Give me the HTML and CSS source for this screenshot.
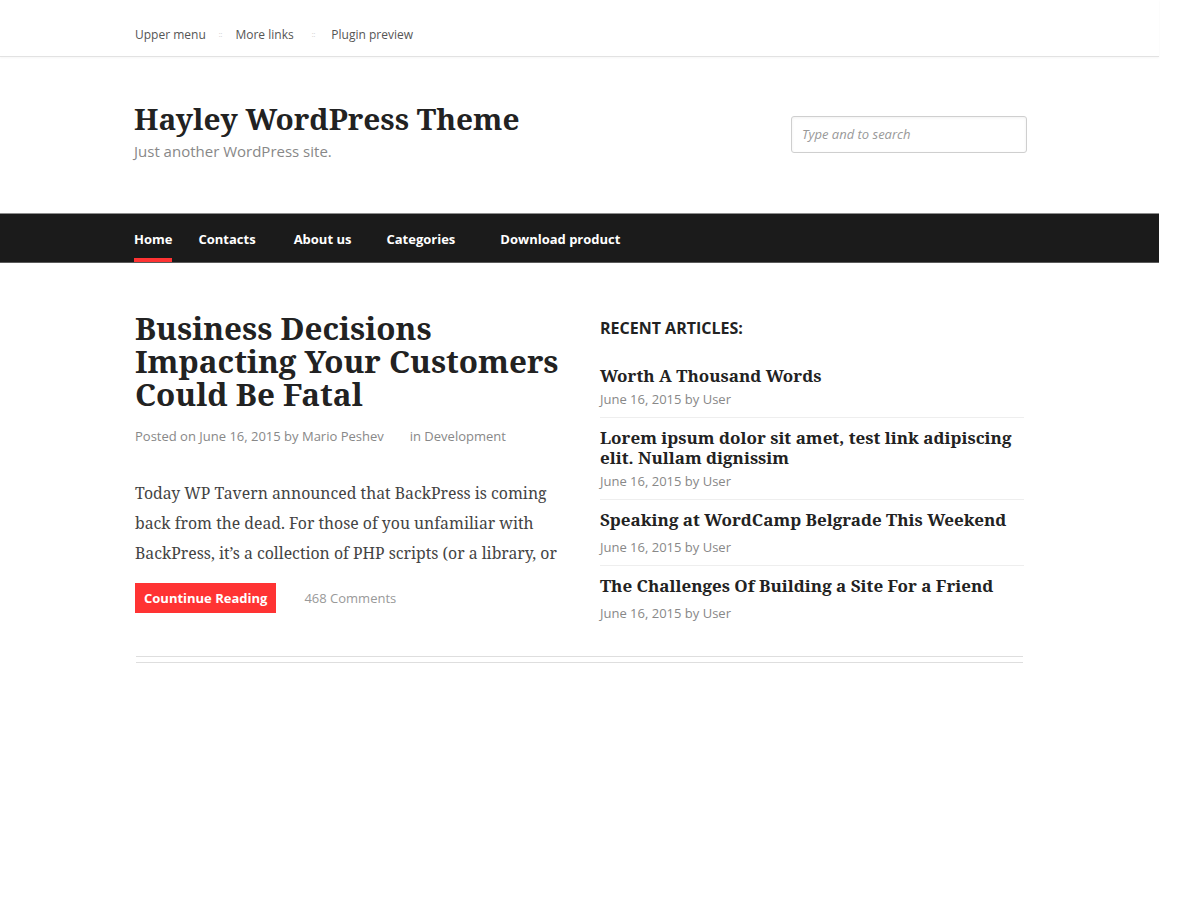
FILE: index.html
```html
<!DOCTYPE html>
<html lang="en">
<head>
<meta charset="utf-8">
<title>Hayley WordPress Theme</title>
<link rel="stylesheet" href="styles.css">
</head>
<body>
<div class="page">
  <div class="topbar">
    <div class="container">
      <ul class="upper-menu">
        <li><a href="#">Upper menu</a></li>
        <li class="sep">::</li>
        <li><a href="#">More links</a></li>
        <li class="sep sep-wide">::</li>
        <li><a href="#">Plugin preview</a></li>
      </ul>
    </div>
  </div>

  <header class="site-header">
    <div class="container header-inner">
      <div class="branding">
        <h1 class="site-title">Hayley WordPress Theme</h1>
        <p class="site-desc">Just another WordPress site.</p>
      </div>
      <input class="search" type="text" placeholder="Type and to search">
    </div>
  </header>

  <nav class="main-nav">
    <div class="container">
      <ul class="nav-list">
        <li class="nav-item active"><a href="#">Home</a></li>
        <li class="nav-item pad-a"><a href="#">Contacts</a></li>
        <li class="nav-item pad-b"><a href="#">About us</a></li>
        <li class="nav-item pad-c"><a href="#">Categories</a></li>
        <li class="nav-item"><a href="#">Download product</a></li>
      </ul>
    </div>
  </nav>

  <main class="container main">
    <article class="post">
      <h2 class="post-title">Business Decisions Impacting Your Customers Could Be Fatal</h2>
      <div class="post-meta">
        <span>Posted on June 16, 2015 by Mario Peshev</span>
        <span>in Development</span>
      </div>
      <p class="excerpt">Today WP Tavern announced that BackPress is coming back from the dead. For those of you unfamiliar with BackPress, it’s a collection of PHP scripts (or a library, or</p>
      <div class="post-actions">
        <a class="btn" href="#">Countinue Reading</a>
        <span class="comments">468 Comments</span>
      </div>
    </article>

    <aside class="sidebar">
      <h3 class="widget-title">RECENT ARTICLES:</h3>
      <ul class="recent">
        <li class="recent-item">
          <a class="recent-title" href="#">Worth A Thousand Words</a>
          <div class="recent-date">June 16, 2015 by User</div>
        </li>
        <li class="recent-item">
          <a class="recent-title" href="#">Lorem ipsum dolor sit amet, test link adipiscing elit. Nullam dignissim</a>
          <div class="recent-date">June 16, 2015 by User</div>
        </li>
        <li class="recent-item spaced">
          <a class="recent-title" href="#">Speaking at WordCamp Belgrade This Weekend</a>
          <div class="recent-date">June 16, 2015 by User</div>
        </li>
        <li class="recent-item spaced">
          <a class="recent-title" href="#">The Challenges Of Building a Site For a Friend</a>
          <div class="recent-date">June 16, 2015 by User</div>
        </li>
      </ul>
    </aside>
  </main>

  <div class="container footer-rule"></div>
</div>
</body>
</html>
```

FILE: styles.css
```css
* { box-sizing: border-box; }

body {
  margin: 0;
  background: #fff;
  font-family: "Open Sans", "Noto Sans", sans-serif;
  color: #222;
}

a { color: inherit; text-decoration: none; }
ul { list-style: none; margin: 0; padding: 0; }

.page { width: 1159px; }

.container {
  width: 889px;
  margin: 0 auto;
}

/* top bar */
.topbar {
  border-bottom: 1px solid #e2e2e2;
  box-shadow: 0 1px 2px rgba(0,0,0,0.04);
  padding: 27px 0 13px;
}
.upper-menu {
  display: flex;
  align-items: center;
  font-size: 12px;
  line-height: 16px;
  color: #555;
}
.upper-menu .sep {
  color: #ccc;
  font-size: 7px;
  margin: 0 13px;
}
.upper-menu .sep-wide { margin: 0 16px 0 18px; }

/* header */
.site-header { padding: 44px 0 52px; }
.header-inner {
  display: flex;
  justify-content: space-between;
  align-items: flex-start;
}
.branding { margin-left: -1px; }
.site-title {
  margin: 0;
  font-family: "Noto Serif", "DejaVu Serif", serif;
  font-weight: 700;
  font-size: 29.8px;
  line-height: 36px;
  color: #222;
}
.site-desc {
  margin: 4px 0 0;
  font-size: 15px;
  line-height: 20px;
  color: #888;
}
.search {
  margin-top: 15px;
  margin-right: -3px;
  width: 236px;
  height: 37px;
  border: 1px solid #cfcfcf;
  border-radius: 3px;
  box-shadow: inset 0 1px 3px rgba(0,0,0,0.06);
  padding: 0 10px 2px;
  font-family: "Open Sans", sans-serif;
  font-size: 13px;
  outline: none;
}
.search::placeholder { color: #999; font-style: italic; }

/* nav */
.main-nav {
  background: #1b1b1b;
  border-top: 1px solid #8c8c8c;
  border-bottom: 1px solid #5a5a5a;
}
.nav-list { display: flex; gap: 27px; margin-left: -1px; }
.nav-item a {
  display: block;
  padding: 16px 0 10px;
  line-height: 18px;
  border-bottom: 4px solid transparent;
  color: #fff;
  font-size: 13px;
  font-weight: 700;
}
.nav-item.active { margin-right: -1px; }
.nav-item.active a { border-bottom-color: #ff3333; }
.nav-item.pad-a { padding-right: 11px; }
.nav-item.pad-b { padding-right: 8px; }
.nav-item.pad-c { padding-right: 18px; }

/* main */
.main {
  display: grid;
  grid-template-columns: 425px 424px;
  column-gap: 40px;
  align-items: start;
  padding: 48px 0 33px;
}
.post-title {
  margin: 0;
  font-family: "Noto Serif", "DejaVu Serif", serif;
  font-weight: 700;
  font-size: 31.4px;
  line-height: 33px;
  color: #222;
}
.post-meta {
  margin-top: 16px;
  display: flex;
  gap: 26px;
  font-size: 13px;
  line-height: 20px;
  color: #888;
}
.excerpt {
  margin: 32px 0 0;
  font-family: "Noto Serif", "DejaVu Serif", serif;
  font-size: 15.8px;
  line-height: 30px;
  color: #444;
}
.post-actions {
  margin-top: 15px;
  display: flex;
  align-items: center;
  gap: 28px;
}
.btn {
  display: block;
  height: 30px;
  line-height: 30px;
  padding: 0 9px;
  background: #ff3333;
  color: #fff;
  font-size: 13px;
  font-weight: 700;
}
.comments { font-size: 13px; color: #999; }

/* sidebar */
.sidebar { padding-top: 6px; }
.widget-title {
  margin: 0 0 27px;
  font-size: 16px;
  line-height: 22px;
  font-weight: 700;
  color: #222;
}
.recent-item {
  padding: 10px 0 8px;
  border-bottom: 1px solid #eee;
}
.recent-item:first-child { padding-top: 0; }
.recent-item:last-child { border-bottom: none; padding-bottom: 0; }
.recent-title {
  display: block;
  font-family: "Noto Serif", "DejaVu Serif", serif;
  font-weight: 700;
  font-size: 17px;
  line-height: 20px;
  color: #222;
}
.recent-date {
  margin-top: 3px;
  font-size: 13px;
  line-height: 20px;
  color: #888;
}
.recent-item.spaced .recent-date { margin-top: 7px; }

/* footer rule */
.footer-rule {
  width: 887px;
  height: 7px;
  border-top: 1px solid #dedede;
  border-bottom: 1px solid #dedede;
}
```
